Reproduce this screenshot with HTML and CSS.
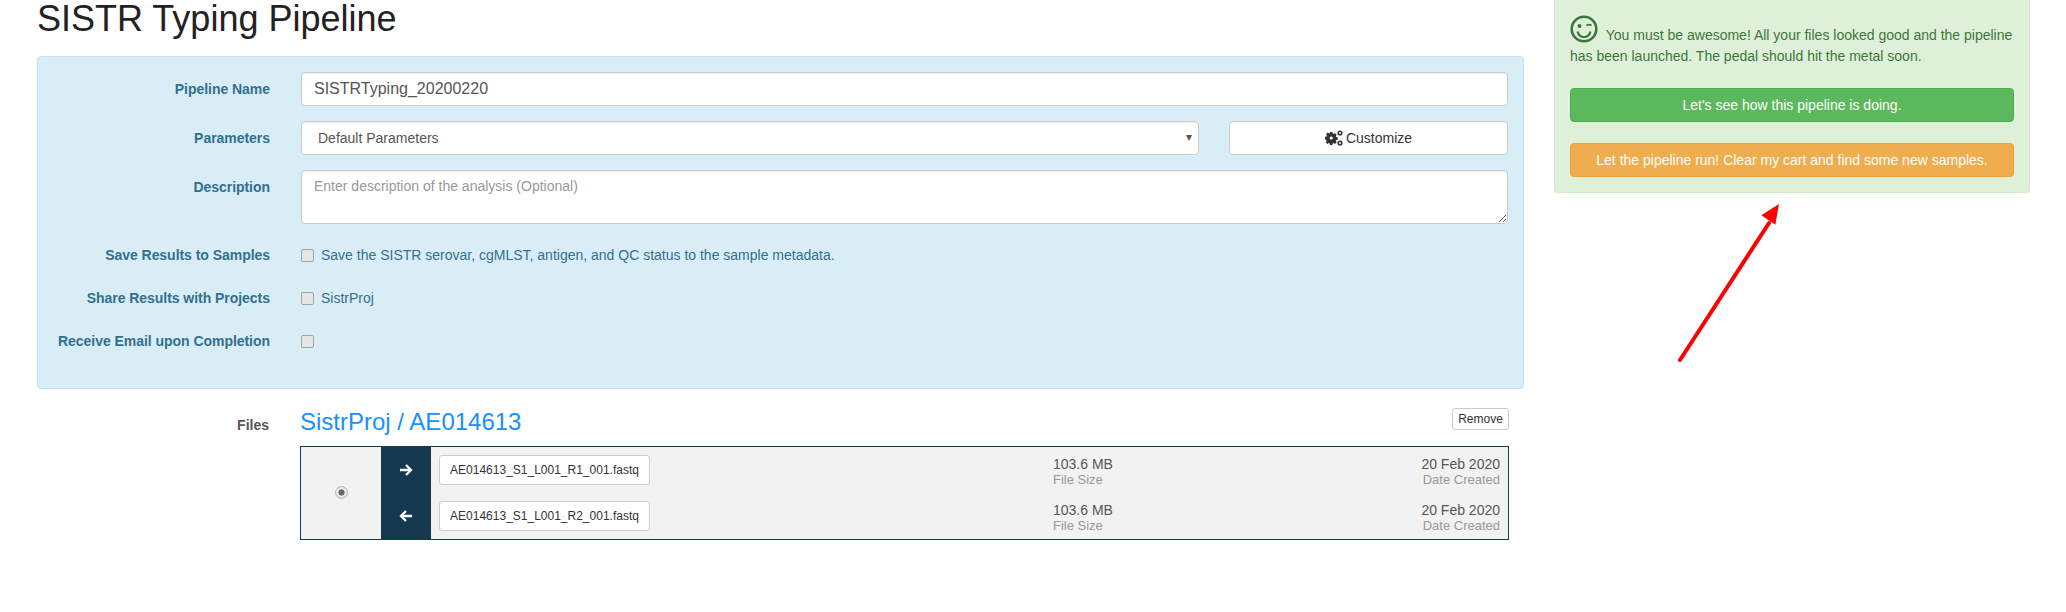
FILE: index.html
```html
<!DOCTYPE html>
<html lang="en">
<head>
<meta charset="utf-8">
<title>SISTR Typing Pipeline</title>
<link rel="stylesheet" href="styles.css">
</head>
<body>
<div class="page">
  <main class="main">
    <h1 class="title">SISTR Typing Pipeline</h1>
    <form class="panel">
      <div class="row">
        <label class="label">Pipeline Name</label>
        <input class="control" type="text" value="SISTRTyping_20200220">
      </div>
      <div class="row">
        <label class="label">Parameters</label>
        <div class="param-group">
          <div class="control select">Default Parameters<span class="caret">▾</span></div>
          <button class="btn-white" type="button">
            <svg class="cogs" viewBox="0 0 18 16" width="18" height="16"><g fill="#333"><path fill-rule="evenodd" d="M5 2h2.400l.3 1.500 1 .4 1.300-.9 1.700 1.700-.9 1.300.4 1 1.500.3v2.400l-1.500.3-.4 1 .9 1.300-1.700 1.700-1.300-.9-1 .4-.3 1.500H5l-.3-1.500-1-.4-1.300.9-1.700-1.700.9-1.300-.4-1L0 9.200V6.800l1.500-.3.4-1-.9-1.300 1.700-1.700 1.300.9 1-.4zM6.200 6.400a1.600 1.600 0 1 0 0 3.200 1.600 1.600 0 0 0 0-3.200z"/><path fill-rule="evenodd" d="M15 .4a2.600 2.600 0 1 1 0 5.200 2.600 2.600 0 0 1 0-5.200zm0 1.600a1 1 0 1 0 0 2 1 1 0 0 0 0-2z"/><path fill-rule="evenodd" d="M15 10.400a2.600 2.600 0 1 1 0 5.200 2.600 2.600 0 0 1 0-5.200zm0 1.600a1 1 0 1 0 0 2 1 1 0 0 0 0-2z"/></g></svg>
            Customize
          </button>
        </div>
      </div>
      <div class="row">
        <label class="label label-top">Description</label>
        <textarea class="control area" placeholder="Enter description of the analysis (Optional)"></textarea>
      </div>
      <div class="checks">
        <div class="row check-row">
          <label class="label">Save Results to Samples</label>
          <label class="check"><input type="checkbox"> Save the SISTR serovar, cgMLST, antigen, and QC status to the sample metadata.</label>
        </div>
        <div class="row check-row">
          <label class="label">Share Results with Projects</label>
          <label class="check"><input type="checkbox"> SistrProj</label>
        </div>
        <div class="row check-row">
          <label class="label">Receive Email upon Completion</label>
          <label class="check"><input type="checkbox"></label>
        </div>
      </div>
    </form>
    <section class="files">
      <div class="files-label">Files</div>
      <div class="files-body">
        <div class="files-head">
          <h3 class="sample-name">SistrProj / AE014613</h3>
          <button class="btn-remove" type="button">Remove</button>
        </div>
        <div class="file-box">
          <div class="radio-cell"><input type="radio" checked></div>
          <div class="file-rows">
            <div class="file-row">
              <div class="dir">
                <svg viewBox="0 0 14 14" width="14" height="14"><path d="M1 7h11M7 2l5 5-5 5" fill="none" stroke="#fff" stroke-width="2.300"/></svg>
              </div>
              <button class="btn-file" type="button">AE014613_S1_L001_R1_001.fastq</button>
              <div class="stat stat-size"><div class="stat-value">103.6 MB</div><div class="stat-name">File Size</div></div>
              <div class="stat stat-date"><div class="stat-value">20 Feb 2020</div><div class="stat-name">Date Created</div></div>
            </div>
            <div class="file-row">
              <div class="dir">
                <svg viewBox="0 0 14 14" width="14" height="14"><path d="M13 7H2M7 2 2 7l5 5" fill="none" stroke="#fff" stroke-width="2.300"/></svg>
              </div>
              <button class="btn-file" type="button">AE014613_S1_L001_R2_001.fastq</button>
              <div class="stat stat-size"><div class="stat-value">103.6 MB</div><div class="stat-name">File Size</div></div>
              <div class="stat stat-date"><div class="stat-value">20 Feb 2020</div><div class="stat-name">Date Created</div></div>
            </div>
          </div>
        </div>
      </div>
    </section>
  </main>
  <aside class="aside">
    <div class="alert">
      <p class="alert-text">
        <svg class="smile" viewBox="0 0 28 28" width="28" height="28"><circle cx="14" cy="14" r="12.300" fill="none" stroke="#3c763d" stroke-width="2.600"/><circle cx="9.500" cy="11" r="2" fill="#3c763d"/><path d="M16.500 10.500q2.500-1.800 5 0" fill="none" stroke="#3c763d" stroke-width="1.800"/><path d="M7.500 16.500q1.500 5.500 6.500 5.500t6.500-5.500" fill="none" stroke="#3c763d" stroke-width="2.200"/></svg>
        &nbsp;You must be awesome! All your files looked good and the pipeline has been launched. The pedal should hit the metal soon.
      </p>
      <button class="btn btn-green" type="button">Let's see how this pipeline is doing.</button>
      <button class="btn btn-orange" type="button">Let the pipeline run! Clear my cart and find some new samples.</button>
    </div>
  </aside>
</div>
<svg class="red-arrow" width="2066" height="612" viewBox="0 0 2066 612"><path d="M1680 360 1769 223" fill="none" stroke="#f00" stroke-width="4" stroke-linecap="round"/><path d="M1779 204 1761.300 215.300 1775.300 224.700z" fill="#f00"/></svg>
</body>
</html>
```
FILE: styles.css
```css
* { box-sizing: border-box; }
html, body { margin: 0; padding: 0; }
body {
  font-family: "Liberation Sans", Arial, sans-serif;
  font-size: 14px;
  line-height: 20px;
  color: #333;
  background: #fff;
  height: 612px;
  overflow: hidden;
}
.page {
  display: grid;
  grid-template-columns: 1487px 476px;
  column-gap: 30px;
  padding-left: 37px;
  align-items: start;
}
.title {
  margin: 0;
  height: 56px;
  font-size: 36px;
  font-weight: 400;
  line-height: 38px;
  color: #222;
}
.panel {
  display: flex;
  flex-direction: column;
  gap: 15px;
  height: 333px;
  padding: 15px 15px 0 0;
  background: #d9edf7;
  border: 1px solid #bce8f1;
  border-radius: 4px;
}
.row { display: flex; align-items: center; gap: 31px; }
.label {
  flex: 0 0 232px;
  text-align: right;
  font-weight: 700;
  letter-spacing: -0.04px;
  color: #31708f;
}
.label-top { align-self: flex-start; padding-top: 7px; }
.control {
  flex: 1;
  min-width: 0;
  height: 34px;
  padding: 6px 12px;
  background: #fff;
  border: 1px solid #ccc;
  border-radius: 4px;
  box-shadow: inset 0 1px 1px rgba(0,0,0,.075);
  font-family: inherit;
  color: #555;
}
input.control { font-size: 16px; }
.param-group { flex: 1; display: flex; gap: 30px; min-width: 0; }
.select { position: relative; padding-left: 16px; line-height: 20px; }
.caret { position: absolute; right: 6px; top: 5px; font-size: 12px; color: #555; }
.btn-white {
  flex: 0 0 279px;
  height: 34px;
  padding: 0;
  background: #fff;
  border: 1px solid #ccc;
  border-radius: 4px;
  font: inherit;
  color: #333;
  display: flex;
  align-items: center;
  justify-content: center;
  gap: 3px;
}
.area { height: 54px; padding-top: 7px; resize: vertical; font-size: 14px; }
.area::placeholder { color: #999; opacity: 1; }
.checks { display: flex; flex-direction: column; gap: 15px; margin-top: 2px; }
.check-row { height: 28px; }
.check { display: flex; align-items: center; gap: 7px; color: #31708f; }
.check input {
  appearance: none;
  width: 13px;
  height: 13px;
  margin: 0;
  background: #e6e6e6;
  border: 1px solid #a3a3a3;
  border-radius: 2px;
}
.files { display: flex; gap: 31px; margin-top: 19px; }
.files-label {
  flex: 0 0 232px;
  padding-top: 7px;
  text-align: right;
  font-weight: 700;
  color: #555;
}
.files-body { flex: 0 0 1209px; }
.files-head { display: flex; justify-content: space-between; align-items: flex-start; height: 38px; }
.sample-name { margin: 0; font-size: 24px; font-weight: 400; line-height: 28px; color: #1890ff; }
.btn-remove {
  height: 22px;
  width: 57px;
  padding: 0;
  background: #fff;
  border: 1px solid #ccc;
  border-radius: 3px;
  font: 12px/18px "Liberation Sans", Arial, sans-serif;
  color: #333;
}
.file-box {
  display: flex;
  height: 94px;
  background: #f2f2f2;
  border: 1px solid #15394f;
}
.radio-cell { flex: 0 0 80px; display: flex; align-items: center; justify-content: center; padding-bottom: 1px; }
.radio-cell input {
  appearance: none;
  margin: 0;
  width: 13px;
  height: 13px;
  border: 1px solid #b5b5b5;
  border-radius: 50%;
  background: radial-gradient(circle, #666 0 2.800px, #e6e6e6 3.300px);
}
.file-rows { flex: 1; display: flex; flex-direction: column; }
.file-row { flex: 1; display: flex; align-items: center; padding-right: 8px; }
.dir {
  flex: 0 0 50px;
  align-self: stretch;
  display: flex;
  align-items: center;
  justify-content: center;
  background: #15394f;
}
.btn-file {
  flex: 0 0 211px;
  height: 30px;
  margin-left: 8px;
  padding: 0;
  background: #fff;
  border: 1px solid #ccc;
  border-radius: 3px;
  font: 12px/18px "Liberation Sans", Arial, sans-serif;
  color: #333;
}
.stat { line-height: 16px; padding-top: 4px; }
.stat-size { margin-left: 403px; }
.stat-date { margin-left: auto; text-align: right; }
.stat-value { font-size: 14px; color: #555; }
.stat-name { font-size: 13px; color: #999; }
.alert {
  padding: 15px;
  background: #dff0d8;
  border: 1px solid #d6e9c6;
  border-top: 0;
  border-radius: 0 0 4px 4px;
  color: #3c763d;
}
.alert-text { margin: 0 0 21.400px; line-height: 21px; }
.smile { vertical-align: -3px; }
.btn {
  display: block;
  width: 100%;
  height: 34px;
  padding: 0;
  border: 1px solid;
  border-radius: 4px;
  font: inherit;
  color: #fff;
}
.btn-green { background: #5cb85c; border-color: #4cae4c; margin-bottom: 21px; }
.btn-orange { background: #f0ad4e; border-color: #eea236; }
.red-arrow { position: absolute; left: 0; top: 0; pointer-events: none; }
```
